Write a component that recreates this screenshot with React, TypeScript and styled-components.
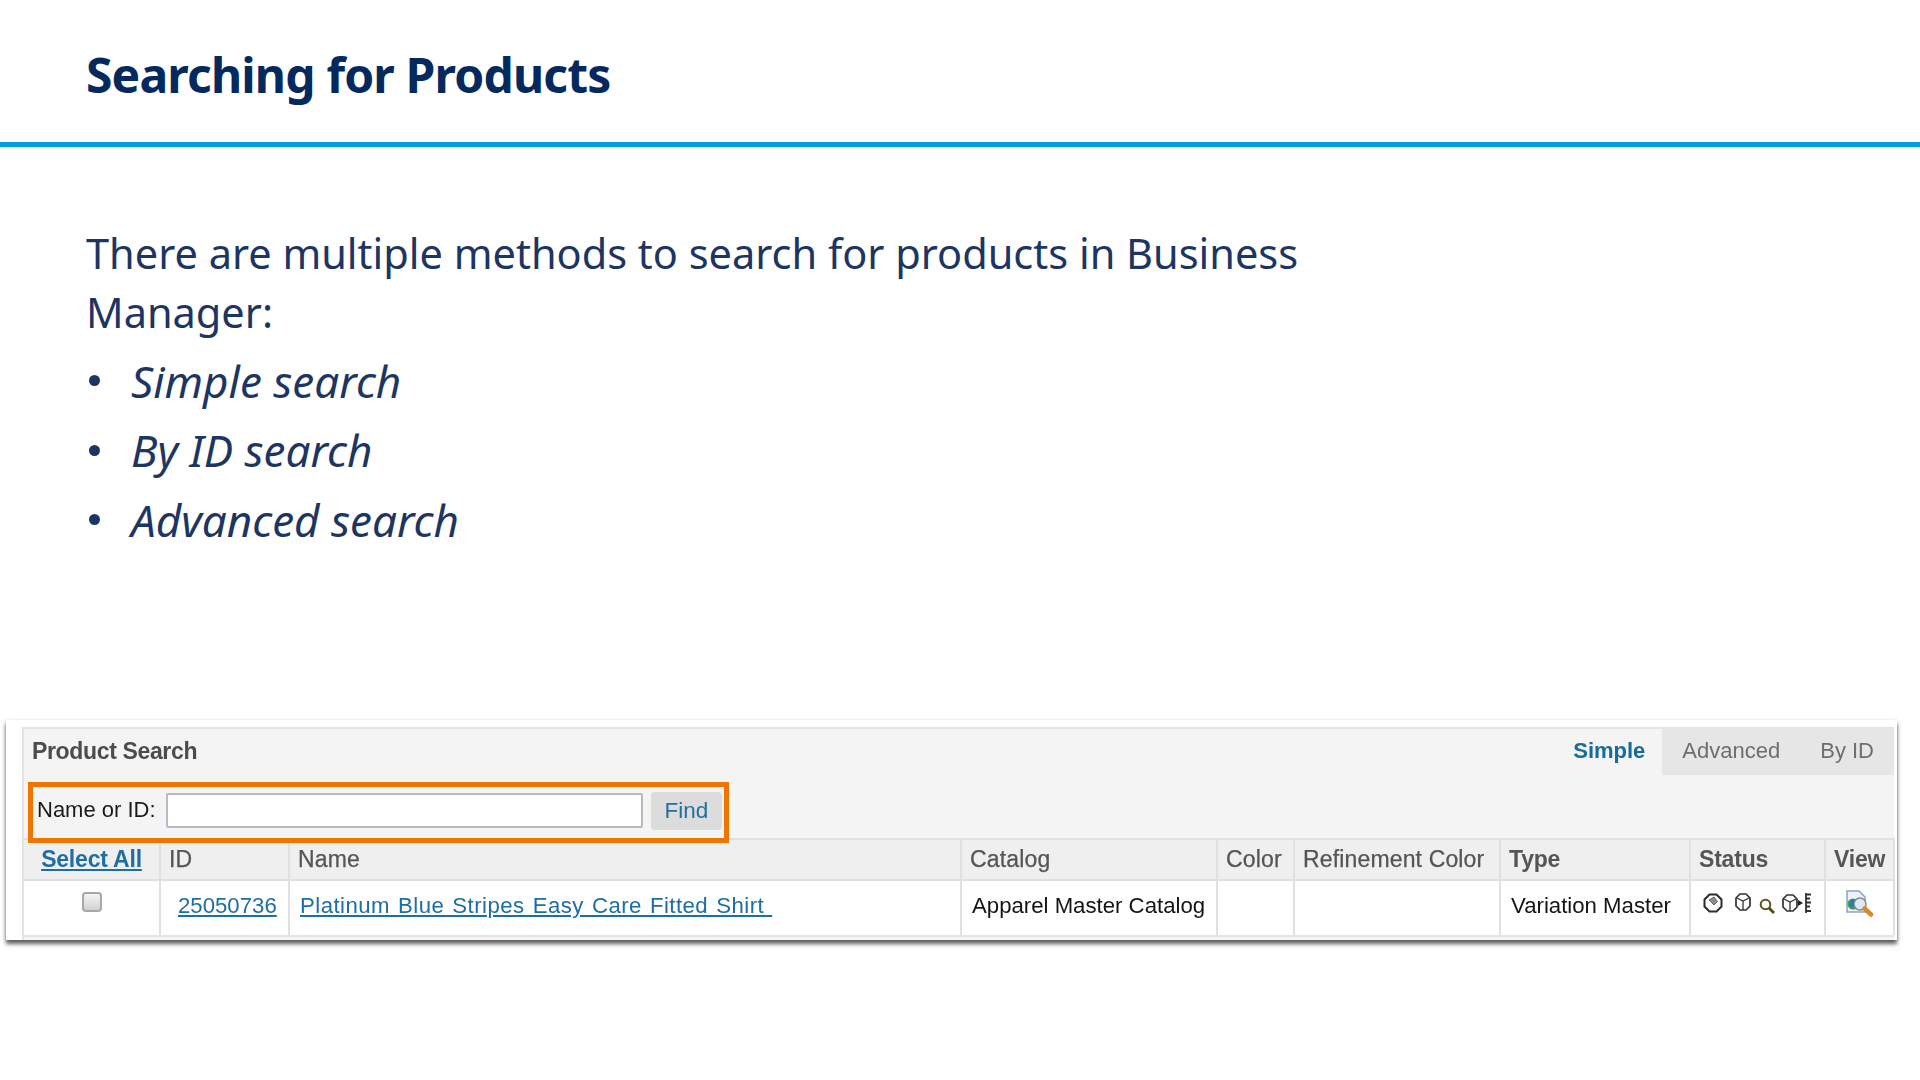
import styled, { createGlobalStyle } from "styled-components";

const GlobalStyle = createGlobalStyle`
  html, body {
    margin: 0;
    padding: 0;
    background: #fff;
  }
  body {
    width: 1920px;
    height: 1080px;
    overflow: hidden;
    font-family: "Noto Sans", "Open Sans", sans-serif;
  }
`;

const Page = styled.div`
  width: 1920px;
  height: 1080px;
  display: flex;
  flex-direction: column;
`;

const TitleBar = styled.header`
  height: 142px;
  box-sizing: border-box;
  padding: 44px 0 0 86px;
`;

const Title = styled.h1`
  margin: 0;
  font-size: 48px;
  line-height: 62px;
  font-weight: 700;
  letter-spacing: -0.83px;
  color: #03295e;
`;

const Rule = styled.div`
  height: 5px;
  background: #009fdb;
`;

const Content = styled.section`
  height: 573px;
  box-sizing: border-box;
  padding: 77px 0 0 86px;
  color: #1d3562;
`;

const Lead = styled.p`
  margin: 0 0 4px;
  width: 1240px;
  font-size: 41.5px;
  line-height: 59px;
`;

const Bullets = styled.ul`
  margin: 0;
  padding: 0;
  list-style: none;
`;

const Bullet = styled.li`
  height: 69.5px;
  display: flex;
  align-items: center;
  font-size: 44px;
  font-style: italic;
  &::before {
    content: "";
    width: 11px;
    height: 11px;
    border-radius: 50%;
    background: #1d3562;
    margin: 0 31px 0 3px;
  }
`;

const Shot = styled.figure`
  margin: 0 0 0 6px;
  width: 1891px;
  height: 220px;
  box-sizing: border-box;
  padding: 7px 3px 0 16px;
  background: #fff;
  box-shadow: 0 4px 4px rgba(40, 40, 40, 0.7), 0 1px 4px rgba(0, 0, 0, 0.2);
  font-family: "Liberation Sans", Arial, sans-serif;
  filter: blur(0.35px);
`;

const Panel = styled.div`
  position: relative;
  height: 100%;
  background: #f4f4f4;
  border-top: 2px solid #e4e4e4;
  border-left: 2px solid #e4e4e4;
  box-sizing: border-box;
  display: flex;
  flex-direction: column;
`;

const PanelHead = styled.div`
  height: 46px;
  flex: none;
  display: flex;
  justify-content: space-between;
  align-items: stretch;
`;

const PanelTitle = styled.span`
  padding: 8px 0 0 8px;
  font-size: 23px;
  line-height: 28px;
  font-weight: 700;
  color: #4c4c4c;
  letter-spacing: -0.35px;
`;

const Tabs = styled.div`
  display: flex;
`;

const Tab = styled.span<{ $active?: boolean }>`
  display: flex;
  align-items: center;
  padding: 0 ${(p) => (p.$active ? "17px" : "20px")} 2px;
  font-size: 22px;
  font-weight: ${(p) => (p.$active ? 700 : 400)};
  color: ${(p) => (p.$active ? "#156a9e" : "#6e6e6e")};
  background: ${(p) => (p.$active ? "#f4f4f4" : "#e6e6e6")};
`;

const SearchRow = styled.div`
  height: 63px;
  flex: none;
  display: flex;
  align-items: center;
  padding: 8px 0 0 13px;
  box-sizing: border-box;
  gap: 8px;
`;

const Label = styled.label`
  font-size: 22px;
  color: #1a1a1a;
  width: 121px;
  margin-top: -1px;
  white-space: nowrap;
`;

const SearchInput = styled.input`
  width: 477px;
  height: 35px;
  box-sizing: border-box;
  background: #fff;
  border: 2px solid #b7bac2;
  border-radius: 2px;
`;

const FindButton = styled.button`
  width: 71px;
  height: 38px;
  border: 0;
  border-radius: 4px;
  background: #dcdcdc;
  color: #236f9e;
  font-family: inherit;
  font-size: 22.5px;
`;

const Highlight = styled.div`
  position: absolute;
  left: 4px;
  top: 53px;
  width: 701px;
  height: 61px;
  box-sizing: border-box;
  border: 5px solid #ee7600;
`;

const Grid = styled.div`
  flex: none;
  display: grid;
  grid-template-columns: 137px 129px 672px 256px 77px 206px 190px 135px 69px;
  grid-template-rows: 43px 54px;
  border-bottom: 2px solid #e4e4e4;
  background: #fff;
`;

const HeadCell = styled.div<{ $center?: boolean }>`
  display: flex;
  align-items: center;
  justify-content: ${(p) => (p.$center ? "center" : "flex-start")};
  box-sizing: border-box;
  padding: 0 8px;
  background: #efefef;
  border-top: 2px solid #e0e0e0;
  border-bottom: 2px solid #e0e0e0;
  border-right: 2px solid #e0e0e0;
  font-size: 23px;
  font-weight: 400;
  letter-spacing: 0.15px;
  color: #555;
  -webkit-text-stroke: 0.25px #555;
  white-space: nowrap;
`;

const BoldHeadCell = styled(HeadCell)`
  font-weight: 700;
  letter-spacing: -0.2px;
  -webkit-text-stroke: 0;
`;

const Cell = styled.div<{ $pad?: number; $top?: number }>`
  display: flex;
  justify-content: ${(p) => (p.$pad === undefined ? "center" : "flex-start")};
  box-sizing: border-box;
  padding: ${(p) => p.$top ?? 11}px 0 0 ${(p) => p.$pad ?? 0}px;
  border-right: 2px solid #e0e0e0;
  font-size: 22.2px;
  line-height: 28px;
  color: #141414;
  white-space: pre;
`;

const RowLink = styled.a`
  color: #1c6ea4;
  text-decoration: underline;
`;

const NameLink = styled(RowLink)`
  letter-spacing: 0.45px;
  word-spacing: 1.5px;
`;

const HeadLink = styled(RowLink)`
  font-weight: 700;
`;

const Check = styled.span`
  width: 20px;
  height: 20px;
  box-sizing: border-box;
  border: 2px solid #a8a8a8;
  border-radius: 4px;
  background: linear-gradient(#f4f4f4, #d2d2d2);
`;

const StatusIcons = styled.div`
  display: flex;
  align-items: flex-start;
  gap: 12px;
  svg {
    display: block;
  }
`;

const TightIcon = styled.svg`
  margin: 5px -6px 0 -4px;
`;

function PublishedIcon() {
  return (
    <svg width="20" height="20" viewBox="0 0 20 20" fill="none" stroke="#2c2c2c" strokeWidth="2">
      <path d="M6.5 1.5h7l5 5v7l-5 5h-7l-5-5v-7z" />
      <path d="M6 7l5-3 3.5 4.5L11 12z" fill="#8c8c8c" stroke="#6c6c6c" strokeWidth="1" />
    </svg>
  );
}

function CubeIcon() {
  return (
    <svg width="16" height="18" viewBox="0 0 16 18" fill="none" stroke="#333" strokeWidth="1.7">
      <path d="M5 1h6l4 4v8l-4 4H5l-4-4V5z" />
      <path d="M2 5l6 3 6-3M8 8v9" strokeWidth="1.3" />
    </svg>
  );
}

function SearchIcon() {
  return (
    <TightIcon width="16" height="16" viewBox="0 0 16 16" fill="none" stroke="#4e4e14" strokeWidth="2">
      <circle cx="6.5" cy="6.5" r="4.8" stroke="#55551e" />
      <path d="M10 10l5 5" strokeWidth="2.8" />
    </TightIcon>
  );
}

function CubeRulerIcon() {
  return (
    <svg width="32" height="20" viewBox="0 0 32 20" fill="none" stroke="#333" strokeWidth="1.7">
      <path d="M6 2h6l4 4v8l-4 4H6l-4-4V6z" />
      <path d="M3 6l6 3 6-3M9 9v9" strokeWidth="1.3" />
      <path d="M17 7l5 3-5 3z" fill="#222" stroke="none" />
      <path d="M25 0v20M25 1.5h5M25 5.5h4M25 9.5h5M25 13.5h4M25 18h5" strokeWidth="1.8" />
    </svg>
  );
}

function ViewIcon() {
  return (
    <svg width="28" height="28" viewBox="0 0 28 28" fill="none">
      <path d="M1 1h12l6 6v15H1z" fill="#eef2f8" stroke="#8ea2c0" strokeWidth="1.5" />
      <circle cx="7" cy="14" r="5.5" fill="#3d9a5a" />
      <path d="M5 10c3-1 5 0 5 3s-3 5-6 3z" fill="#2c76c0" />
      <circle cx="14" cy="14" r="6" fill="#dfe9f2" stroke="#7d8a98" strokeWidth="1.5" />
      <path d="M18.5 18.5l6.5 6" stroke="#d98a24" strokeWidth="4.5" strokeLinecap="round" />
    </svg>
  );
}

export default function App() {
  return (
    <Page>
      <GlobalStyle />
      <TitleBar>
        <Title>Searching for Products</Title>
      </TitleBar>
      <Rule />
      <Content>
        <Lead>There are multiple methods to search for products in Business Manager:</Lead>
        <Bullets>
          <Bullet>Simple search</Bullet>
          <Bullet>By ID search</Bullet>
          <Bullet>Advanced search</Bullet>
        </Bullets>
      </Content>
      <Shot>
        <Panel>
          <PanelHead>
            <PanelTitle>Product Search</PanelTitle>
            <Tabs>
              <Tab $active>Simple</Tab>
              <Tab>Advanced</Tab>
              <Tab>By ID</Tab>
            </Tabs>
          </PanelHead>
          <SearchRow>
            <Label>Name or ID:</Label>
            <SearchInput />
            <FindButton>Find</FindButton>
          </SearchRow>
          <Grid>
            <BoldHeadCell $center>
              <HeadLink>Select All</HeadLink>
            </BoldHeadCell>
            <HeadCell>ID</HeadCell>
            <HeadCell>Name</HeadCell>
            <HeadCell>Catalog</HeadCell>
            <HeadCell>Color</HeadCell>
            <HeadCell>Refinement Color</HeadCell>
            <BoldHeadCell>Type</BoldHeadCell>
            <BoldHeadCell>Status</BoldHeadCell>
            <BoldHeadCell>View</BoldHeadCell>
            <Cell>
              <Check />
            </Cell>
            <Cell $pad={17}>
              <RowLink>25050736</RowLink>
            </Cell>
            <Cell $pad={10}>
              <NameLink>{"Platinum Blue Stripes Easy Care Fitted Shirt "}</NameLink>
            </Cell>
            <Cell $pad={10}>Apparel Master Catalog</Cell>
            <Cell />
            <Cell />
            <Cell $pad={10}>Variation Master</Cell>
            <Cell $pad={12} $top={12}>
              <StatusIcons>
                <PublishedIcon />
                <CubeIcon />
                <SearchIcon />
                <CubeRulerIcon />
              </StatusIcons>
            </Cell>
            <Cell $top={9}>
              <ViewIcon />
            </Cell>
          </Grid>
          <Highlight />
        </Panel>
      </Shot>
    </Page>
  );
}
